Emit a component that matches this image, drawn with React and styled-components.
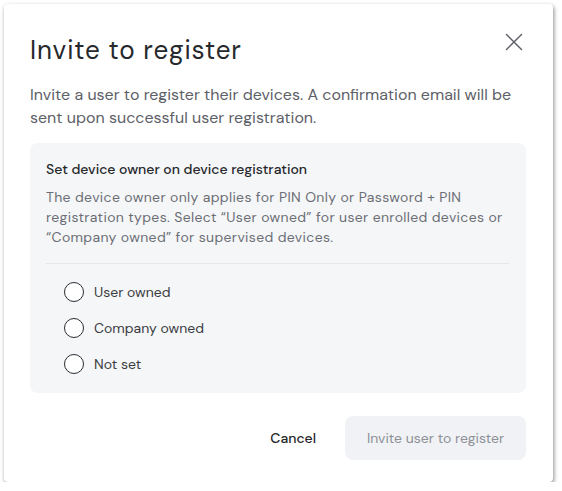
import React from "react";
import styled, { createGlobalStyle } from "styled-components";

const GlobalStyle = createGlobalStyle`
  body {
    margin: 0;
    background: #ffffff;
    font-family: "DM Sans", Inter, "Noto Sans", sans-serif;
  }
`;

const options = ["User owned", "Company owned", "Not set"];

export default function App() {
  return (
    <Page>
      <GlobalStyle />
      <Dialog>
        <Header>
          <Title>Invite to register</Title>
          <CloseButton aria-label="Close">
            <svg width="18" height="18" viewBox="0 0 18 18" fill="none">
              <path d="M1.5 1.5L16.5 16.5M16.5 1.5L1.5 16.5" stroke="#5b5e66" strokeWidth="1.4" strokeLinecap="round" />
            </svg>
          </CloseButton>
        </Header>
        <Intro>
          Invite a user to register their devices. A confirmation email will be
          sent upon successful user registration.
        </Intro>
        <OwnerPanel>
          <PanelTitle>Set device owner on device registration</PanelTitle>
          <PanelText>
            The device owner only applies for PIN Only or Password + PIN
            registration types. Select “User owned” for user enrolled devices or
            “Company owned” for supervised devices.
          </PanelText>
          <Divider />
          <RadioList>
            {options.map((o) => (
              <RadioRow key={o}>
                <RadioCircle />
                <RadioLabel>{o}</RadioLabel>
              </RadioRow>
            ))}
          </RadioList>
        </OwnerPanel>
        <Footer>
          <TextButton>Cancel</TextButton>
          <PrimaryButton disabled>Invite user to register</PrimaryButton>
        </Footer>
      </Dialog>
    </Page>
  );
}

const Page = styled.div`
  padding: 4px 0 0 4px;
`;

const Dialog = styled.div`
  width: 549px;
  height: 478px;
  box-sizing: border-box;
  background: #ffffff;
  border-radius: 4px;
  box-shadow: 1px 2px 4px rgba(0, 0, 0, 0.45);
  padding: 28px 27px 0 26px;
  display: flex;
  flex-direction: column;
`;

const Header = styled.div`
  display: flex;
  justify-content: space-between;
  align-items: flex-start;
`;

const Title = styled.h1`
  margin: 0;
  font-size: 26px;
  line-height: 36px;
  font-weight: 400;
  letter-spacing: 0.9px;
  color: #26282c;
`;

const CloseButton = styled.button`
  border: none;
  background: none;
  padding: 0;
  margin: -2px 0 0 0;
  width: 24px;
  height: 24px;
  display: flex;
  align-items: center;
  justify-content: center;
  cursor: pointer;
`;

const Intro = styled.p`
  margin: 15px 0 0;
  font-size: 16px;
  line-height: 23px;
  color: #5d6067;
`;

const OwnerPanel = styled.div`
  margin-top: 14px;
  background: #f5f6f8;
  border-radius: 8px;
  padding: 16px 17px 19px 16px;
`;

const PanelTitle = styled.div`
  font-size: 14px;
  font-weight: 500;
  line-height: 20px;
  color: #26282c;
`;

const PanelText = styled.p`
  margin: 8px 0 0;
  font-size: 14px;
  letter-spacing: 0.35px;
  line-height: 20px;
  color: #6b6e75;
`;

const Divider = styled.hr`
  margin: 16px 0 0;
  border: none;
  border-top: 1px solid #e4e6ea;
`;

const RadioList = styled.div`
  display: flex;
  flex-direction: column;
  gap: 16px;
  padding: 18px 0 0 18px;
`;

const RadioRow = styled.label`
  display: flex;
  align-items: center;
  gap: 10px;
  height: 20px;
`;

const RadioCircle = styled.span`
  width: 20px;
  height: 20px;
  box-sizing: border-box;
  border: 1.5px solid #2a2c30;
  border-radius: 50%;
  background: #ffffff;
`;

const RadioLabel = styled.span`
  font-size: 14px;
  color: #3a3c41;
`;

const Footer = styled.div`
  display: flex;
  justify-content: flex-end;
  align-items: center;
  gap: 29px;
  margin-top: 23px;
`;

const TextButton = styled.button`
  border: none;
  background: none;
  padding: 0;
  font-family: inherit;
  font-size: 14px;
  font-weight: 500;
  color: #26282c;
  cursor: pointer;
`;

const PrimaryButton = styled.button`
  border: none;
  height: 44px;
  width: 181px;
  border-radius: 8px;
  background: #f1f2f5;
  font-family: inherit;
  font-size: 14px;
  color: #8d9096;
`;
